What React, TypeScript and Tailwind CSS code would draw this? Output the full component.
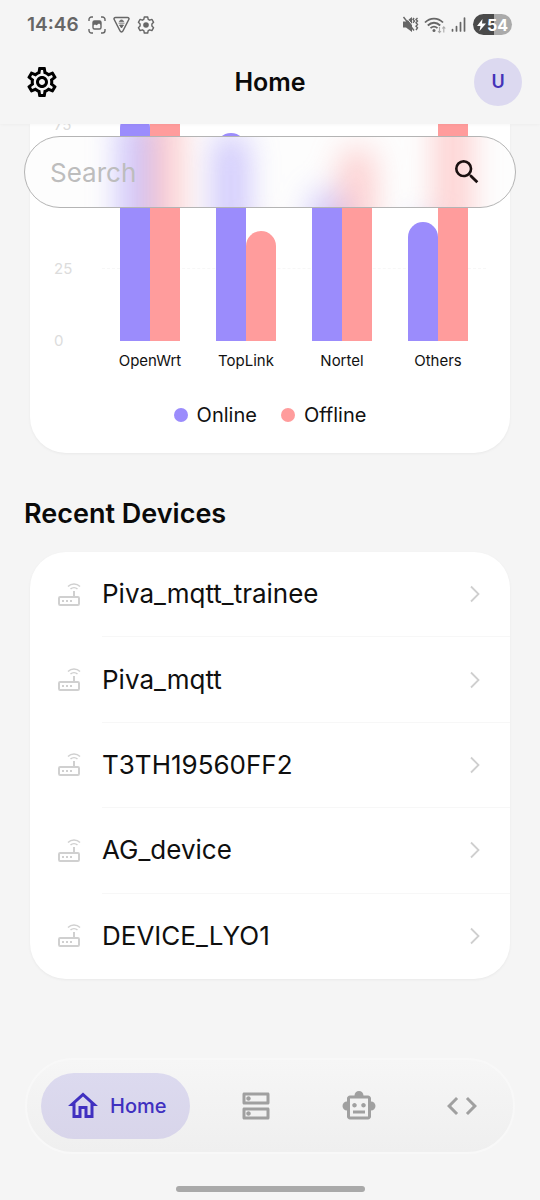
import type { ReactNode } from "react";
import {
  MdCode,
  MdOutlineDns,
  MdOutlineHome,
  MdOutlineSettings,
  MdOutlineSmartToy,
  MdSearch,
} from "react-icons/md";

type Vendor = { name: string; online: number; offline: number };

const vendors: Vendor[] = [
  { name: "OpenWrt", online: 228, offline: 288 },
  { name: "TopLink", online: 208, offline: 110 },
  { name: "Nortel", online: 150, offline: 193 },
  { name: "Others", online: 119, offline: 288 },
];

const ticks = [75, 50, 25, 0];

const devices = ["Piva_mqtt_trainee", "Piva_mqtt", "T3TH19560FF2", "AG_device", "DEVICE_LYO1"];

function StatusBar() {
  return (
    <div className="flex h-[49px] items-center justify-between pr-7 pl-[27px] text-[#666]">
      <div className="flex items-center gap-[7px]">
        <span className="mr-[2px] text-[19px] leading-6 font-semibold">14:46</span>
        <svg width="18" height="18" viewBox="0 0 18 18" fill="none" stroke="currentColor" strokeWidth="1.400" aria-hidden="true">
          <path d="M1 5V3.500A2.500 2.500 0 0 1 3.500 1H5M13 1h1.500A2.500 2.500 0 0 1 17 3.500V5M17 13v1.500a2.500 2.500 0 0 1-2.500 2.500H13M5 17H3.500A2.500 2.500 0 0 1 1 14.500V13" />
          <rect x="5" y="5" width="8" height="8" rx="1.500" />
          <path d="M5 9.500V6l1-1h6l1 1v3L11 7.500 8.500 9.200 7 8.500z" fill="currentColor" stroke="none" />
        </svg>
        <svg width="17" height="17" viewBox="0 0 17 17" fill="none" stroke="currentColor" strokeWidth="1.500" strokeLinejoin="round" aria-hidden="true">
          <path d="M2.500 1.500h12c1.200 0 1.800 1 1.300 2L9.900 15c-.6 1.200-2.200 1.200-2.800 0L1.200 3.500c-.5-1 .1-2 1.300-2z" />
          <path d="M6.300 5.600a2.300 2.300 0 0 1 4.400 0zM5.500 7.200h6M6.500 9h4l-2 3z" fill="currentColor" strokeWidth="0.800" />
        </svg>
        <svg width="18" height="18" viewBox="0 0 18 18" fill="none" stroke="currentColor" strokeWidth="1.400" strokeLinejoin="round" aria-hidden="true">
          <path d="M7.300 1h3.400l.5 2.300 1.500.9 2.200-.8 1.700 2.900-1.700 1.600v2.200l1.700 1.600-1.700 2.900-2.200-.8-1.500.9-.5 2.300H7.300l-.5-2.300-1.500-.9-2.200.8-1.700-2.900 1.700-1.600V7.900L1.400 6.300l1.700-2.900 2.200.8 1.500-.9z" />
          <circle cx="9" cy="9" r="2.800" fill="currentColor" stroke="none" />
        </svg>
      </div>
      <div className="flex items-center gap-[5px]">
        <svg width="17" height="17" viewBox="0 0 17 17" fill="none" stroke="currentColor" strokeWidth="1.400" aria-hidden="true">
          <path d="M1 5.500h3L10 1v15l-6-4.500H1z" fill="currentColor" stroke="none" />
          <path d="M3 0l12 14.500" stroke="#f5f5f5" strokeWidth="1" />
          <path d="M1.500 1l10.500 13.500" />
          <path d="M12 2l-1 1.500 1.500 1.500L11 6.800M15.500 2L14 3.500 15.500 5 14 6.800l1.500 1.700L14 10.200l1.500 1.700L14 14" strokeWidth="1.400" />
        </svg>
        <svg width="22" height="18" viewBox="0 0 22 18" fill="none" stroke="currentColor" strokeWidth="1.800" aria-hidden="true">
          <path d="M1 6.500C6 1.200 14 1.200 19 6.500M3.800 9.500c3.700-3.700 8.700-3.700 12.400 0M6.500 12.200c2.200-2 4.800-2 7 0" />
          <circle cx="10" cy="14.500" r="1.500" fill="currentColor" stroke="none" />
          <path d="M15.500 11v5.500M14 15l1.500 1.700L17 15M19.800 16.500V11M18.300 12.500l1.500-1.700 1.500 1.700" stroke="#aaa" strokeWidth="1.100" />
        </svg>
        <svg width="15" height="17" viewBox="0 0 15 17" stroke="currentColor" strokeWidth="1.700" strokeLinecap="round" aria-hidden="true">
          <path d="M1.500 13.500v1.500M5.500 10.500V15M9.500 6.500V15M13.500 2v13" />
        </svg>
        <span className="ml-[2px] flex h-[21px] items-center gap-px rounded-full bg-linear-to-r from-[#4a4a4a] from-54% to-[#aaa] to-54% px-1 text-[16px] leading-5 font-bold text-white">
          <svg width="9" height="12" viewBox="0 0 9 12" fill="currentColor" aria-hidden="true">
            <path d="M5.500 0L0 7h3.500L2.500 12 9 4.500H5z" />
          </svg>
          54
        </span>
      </div>
    </div>
  );
}

function Header() {
  return (
    <header className="relative z-20 bg-[#f5f5f5] shadow-[0_1px_3px_rgba(0,0,0,0.03)]">
      <StatusBar />
      <div className="grid h-[75px] grid-cols-[1fr_auto_1fr] items-center px-[18px] pb-[10px]">
        <button type="button" aria-label="Settings" className="ml-[6px] w-9 text-black">
          <MdOutlineSettings className="size-9" />
        </button>
        <h1 className="text-[25px] leading-8 font-semibold text-[#0a0a0a]">Home</h1>
        <button
          type="button"
          className="flex size-12 items-center justify-center justify-self-end rounded-full bg-[#dcd9f0] text-[18px] font-semibold text-[#4433b8]"
        >
          U
        </button>
      </div>
    </header>
  );
}

function Bars() {
  return (
    <div className="grid flex-1 grid-cols-4 items-end">
      {vendors.map((vendor) => (
        <div key={vendor.name} className="flex h-0 items-end justify-center">
          <div className="w-[30px] rounded-t-full bg-[#9b8cfc]" style={{ height: vendor.online }} />
          <div className="w-[30px] rounded-t-full bg-[#ff9c9c]" style={{ height: vendor.offline }} />
        </div>
      ))}
    </div>
  );
}

function SearchBar() {
  return (
    <form
      role="search"
      className="absolute inset-x-6 top-3 z-10 flex h-[72px] items-center overflow-hidden rounded-full border border-[#b4b4b4] bg-[#fdfdfd] pr-8 pl-[25px]"
    >
      {/* Frosted view of the chart bars that pass behind the field */}
      <div aria-hidden="true" className="absolute right-[29px] -bottom-[134px] left-[77px] opacity-55 blur-[16px]">
        <Bars />
      </div>
      <input
        type="text"
        aria-label="Search"
        placeholder="Search"
        className="relative min-w-0 flex-1 bg-transparent pt-[2px] text-[26px] leading-8 text-[#222] outline-none placeholder:text-[#bdbdbd]"
      />
      <button type="button" aria-label="Submit search" className="relative text-[#1a1010]">
        <MdSearch className="size-8" />
      </button>
    </form>
  );
}

function LegendItem({ dot, children }: { dot: string; children: ReactNode }) {
  return (
    <li className="flex items-center gap-[9px]">
      <span className={`size-[14px] rounded-full ${dot}`} />
      {children}
    </li>
  );
}

function VendorChart() {
  return (
    <section
      aria-label="Devices by vendor"
      className="mx-[30px] overflow-hidden rounded-b-[36px] bg-white pb-6 shadow-[0_1px_3px_rgba(0,0,0,0.05)]"
    >
      <div className="relative flex h-[217px] items-end pr-6">
        <div className="absolute right-6 bottom-[72px] left-[72px] border-t border-dashed border-[#f7f7f7]" />
        <div className="-mb-9 w-[72px] shrink-0 pl-6 text-[15px] text-[#dcdcdc]">
          {ticks.map((tick) => (
            <div key={tick} className="flex h-[72px] items-center">
              {tick}
            </div>
          ))}
        </div>
        <div className="relative flex flex-1">
          <Bars />
        </div>
      </div>
      <div className="mt-2 grid grid-cols-4 pr-6 pl-[72px] text-center text-[15px] leading-6 text-[#111]">
        {vendors.map((vendor) => (
          <span key={vendor.name}>{vendor.name}</span>
        ))}
      </div>
      <ul className="mt-7 flex justify-center gap-6 text-[20px] leading-7 text-[#111]">
        <LegendItem dot="bg-[#9b8cfc]">Online</LegendItem>
        <LegendItem dot="bg-[#ff9c9c]">Offline</LegendItem>
      </ul>
    </section>
  );
}

function RouterIcon() {
  return (
    <svg width="24" height="24" viewBox="0 0 24 24" fill="none" stroke="#d0d0d0" aria-hidden="true">
      <rect x="2" y="14" width="20" height="8" rx="1.200" strokeWidth="2" />
      <path d="M17 8v6" strokeWidth="2" />
      <path d="M5 18h2M9 18h2M13 18h2" strokeWidth="2" />
      <path d="M11 3.500c3.300-3.300 8.700-3.300 12 0M13.500 6c2-1.800 5-1.800 7 0" strokeWidth="1.500" />
    </svg>
  );
}

function DeviceList() {
  return (
    <section className="mt-[43px]">
      <h2 className="px-6 text-[27px] leading-9 font-semibold text-[#0a0a0a]">Recent Devices</h2>
      <ul className="mx-[30px] mt-5 grid min-h-[427px] auto-rows-fr rounded-[36px] bg-white shadow-[0_1px_3px_rgba(0,0,0,0.05)]">
        {devices.map((name) => (
          <li key={name} className="group">
            <a href="#device" className="flex h-full items-center pl-[27px]">
              <RouterIcon />
              <span className="ml-[21px] flex h-full flex-1 items-center justify-between border-b border-[#f7f7f7] pr-7 text-[26px] leading-8 text-[#0f0f0f] group-last:border-transparent">
                {name}
                <svg width="13" height="18" viewBox="0 0 13 18" fill="none" stroke="#cfcfcf" strokeWidth="1.800" aria-hidden="true">
                  <path d="M2 1.500l7.500 7.500L2 16.500" />
                </svg>
              </span>
            </a>
          </li>
        ))}
      </ul>
    </section>
  );
}

function BottomNav() {
  return (
    <nav
      aria-label="Main"
      className="mx-[25px] mt-auto flex items-center rounded-full border-2 border-[#f8f8f8] bg-linear-to-b from-[#f6f6f6] to-[#efefef] py-[13px] pl-[14px]"
    >
      <a
        href="#home"
        aria-current="page"
        className="mr-[14px] flex h-[66px] items-center gap-[9px] rounded-full bg-linear-to-b from-[#dcdaef] to-[#d8d5ea] px-6 text-[20px] font-medium text-[#4030c0]"
      >
        <MdOutlineHome className="size-9" />
        Home
      </a>
      <a href="#servers" aria-label="Servers" className="flex flex-1 justify-center text-[#a0a0a0]">
        <MdOutlineDns className="size-9" />
      </a>
      <a href="#assistant" aria-label="Assistant" className="flex flex-1 justify-center text-[#a0a0a0]">
        <MdOutlineSmartToy className="size-9" />
      </a>
      <a href="#code" aria-label="Code" className="flex flex-1 justify-center text-[#a0a0a0]">
        <MdCode className="size-9" />
      </a>
    </nav>
  );
}

export default function App() {
  return (
    <div className="flex min-h-screen flex-col bg-[#f5f5f5] font-['Inter',sans-serif]">
      <Header />
      <main className="relative pb-16">
        <SearchBar />
        <VendorChart />
        <DeviceList />
      </main>
      <BottomNav />
      <div className="mx-auto mt-8 mb-2 h-[6px] w-[35%] rounded-full bg-[#a9a9a9]" />
    </div>
  );
}
